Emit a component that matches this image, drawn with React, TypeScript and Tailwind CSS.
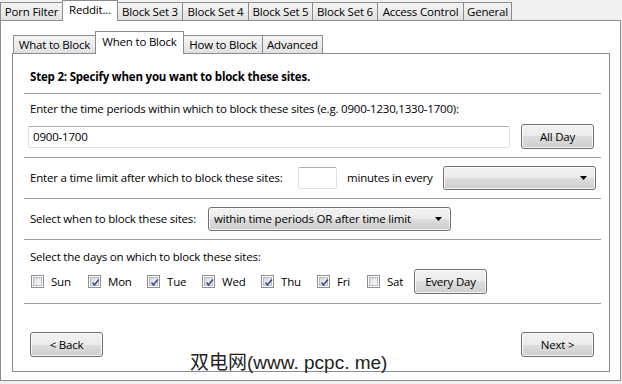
import React from "react"

const face =
  "flex items-center rounded-[3px] border border-[#707070] bg-[linear-gradient(to_bottom,#f2f2f2_0%,#ebebeb_50%,#dddddd_50%,#cfcfcf_100%)] shadow-[inset_0_0_0_1px_rgba(255,255,255,0.75)] text-black"
const btn = `${face} justify-center`

const tabBg = "bg-[linear-gradient(to_bottom,#f4f4f4_0%,#ececec_50%,#e0e0e0_100%)]"

const outerTabs = [
  { label: "Porn Filter", w: "w-[63px]" },
  { label: "Reddit...", w: "w-[56px]", active: true },
  { label: "Block Set 3", w: "w-[66px]" },
  { label: "Block Set 4", w: "w-[67px]" },
  { label: "Block Set 5", w: "w-[65px]" },
  { label: "Block Set 6", w: "w-[66px]" },
  { label: "Access Control", w: "w-[87px]" },
  { label: "General", w: "w-[49px]" },
]

const innerTabs = [
  { label: "What to Block", w: "w-[83px]" },
  { label: "When to Block", w: "w-[89px]", active: true },
  { label: "How to Block", w: "w-[80px]" },
  { label: "Advanced", w: "w-[61px]" },
]

const days = [
  { d: "Sun", w: "w-[57px]", on: false },
  { d: "Mon", w: "w-[59px]", on: true },
  { d: "Tue", w: "w-[55px]", on: true },
  { d: "Wed", w: "w-[59px]", on: true },
  { d: "Thu", w: "w-[56px]", on: true },
  { d: "Fri", w: "w-[50px]", on: true },
  { d: "Sat", w: "w-[47px]", on: false },
]

function Tab({ label, w, active, tall }: { label: string; w: string; active?: boolean; tall: string }) {
  return active ? (
    <div
      className={`${w} ${tall} -ml-px flex items-center justify-center whitespace-nowrap border border-b-0 border-[#898c95] bg-white pb-[3px] first:ml-0`}
    >
      {label}
    </div>
  ) : (
    <div
      className={`${w} mb-px -ml-px flex h-[18px] items-center justify-center whitespace-nowrap border border-b-0 border-[#898c95] ${tabBg} first:ml-0`}
    >
      {label}
    </div>
  )
}

function Check({ on }: { on: boolean }) {
  return (
    <span className="relative flex h-[13px] w-[13px] shrink-0 items-center justify-center border border-[#8e8f8f] bg-white">
      <span className="h-[9px] w-[9px] border border-[#b5b9c0] bg-[linear-gradient(135deg,#d4d8de_0%,#eceef1_60%,#fbfbfb_100%)]" />
      {on && (
        <svg className="absolute left-[1px] top-[1px]" width="11" height="11" viewBox="0 0 11 11">
          <polyline points="2.5,5.5 4.5,8 8.8,2.5" fill="none" stroke="#3f5190" strokeWidth="1.7" />
        </svg>
      )}
    </span>
  )
}

function Arrow() {
  return (
    <svg width="7" height="4" viewBox="0 0 7 4" className="shrink-0">
      <polygon points="0,0 7,0 3.5,4" fill="#000" />
    </svg>
  )
}

export default function App() {
  return (
    <div
      className="relative h-[384px] w-[622px] overflow-hidden bg-[#f0f0f0] text-[11.5px] leading-[16px] tracking-[-0.2px] text-black"
      style={{ fontFamily: '"Open Sans", "Noto Sans", sans-serif' }}
    >
      {/* top tabs */}
      <div className="relative z-10 flex h-[21px] items-end">
        {outerTabs.map((t) => (
          <Tab key={t.label} {...t} tall="h-[21px]" />
        ))}
      </div>

      {/* outer panel */}
      <div className="-mt-px h-[361px] w-[621px] border border-[#898c95] bg-white pl-[11px] pt-[10px]">
        <div className="relative z-10 ml-px flex h-[23px] items-end">
          {innerTabs.map((t) => (
            <Tab key={t.label} {...t} tall="h-[23px]" />
          ))}
        </div>

        {/* inner panel */}
        <div className="-mt-px h-[319px] w-[598px] border border-[#898c95] pl-[11px] pr-[8px]">
          <div className="border-b border-[#a0a0a0] pb-[8px] pl-[6px] pt-[15px] font-bold">
            Step 2: Specify when you want to block these sites.
          </div>

          <div className="border-b border-[#a0a0a0] pb-[8px] pl-[4px] pr-[7px] pt-[7px]">
            <div className="pl-[2px]">
              Enter the time periods within which to block these sites (e.g. 0900-1230,1330-1700):
            </div>
            <div className="mt-[7px] flex h-[25px] items-center justify-between">
              <div className="flex h-[22px] w-[482px] items-center rounded-[2px] border border-[#dbdfe6] border-t-[#abadb3] pl-[4px]">
                0900-1700
              </div>
              <button className={`${btn} h-[25px] w-[73px]`}>All Day</button>
            </div>
          </div>

          <div className="flex h-[41px] items-center border-b border-[#a0a0a0] pl-[6px]">
            <span className="w-[268px] whitespace-nowrap">Enter a time limit after which to block these sites:</span>
            <div className="h-[22px] w-[39px] rounded-[2px] border border-[#dbdfe6] border-t-[#abadb3]" />
            <span className="ml-[10px] w-[96px] whitespace-nowrap">minutes in every</span>
            <div className={`${face} h-[24px] w-[153px] justify-end pr-[8px]`}>
              <Arrow />
            </div>
          </div>

          <div className="flex h-[41px] items-center border-b border-[#a0a0a0] pl-[6px]">
            <span className="w-[178px] whitespace-nowrap">Select when to block these sites:</span>
            <div className={`${face} h-[24px] w-[243px] justify-between pl-[5px] pr-[8px]`}>
              <span className="whitespace-nowrap">within time periods OR after time limit</span>
              <Arrow />
            </div>
          </div>

          <div className="border-b border-[#a0a0a0] pb-[9px] pl-[6px] pt-[9px]">
            <div>Select the days on which to block these sites:</div>
            <div className="mt-[4px] flex h-[25px] items-center pl-px">
              {days.map((x) => (
                <div key={x.d} className={`${x.w} flex items-center`}>
                  <Check on={x.on} />
                  <span className="ml-[7px]">{x.d}</span>
                </div>
              ))}
              <button className={`${btn} h-[25px] w-[73px]`}>Every Day</button>
            </div>
          </div>

          <div className="mt-[28px] flex justify-between pl-[6px] pr-[7px]">
            <button className={`${btn} h-[25px] w-[73px]`}>&lt; Back</button>
            <button className={`${btn} h-[25px] w-[73px]`}>Next &gt;</button>
          </div>
        </div>
      </div>

      {/* watermark */}
      <div
        className="absolute left-[190px] top-[352px] whitespace-nowrap text-[19px] leading-[22px] tracking-normal text-[#222]"
        style={{ fontFamily: '"Liberation Sans", "Noto Sans CJK SC", sans-serif' }}
      >
        双电网(www. pcpc. me)
      </div>
    </div>
  )
}
